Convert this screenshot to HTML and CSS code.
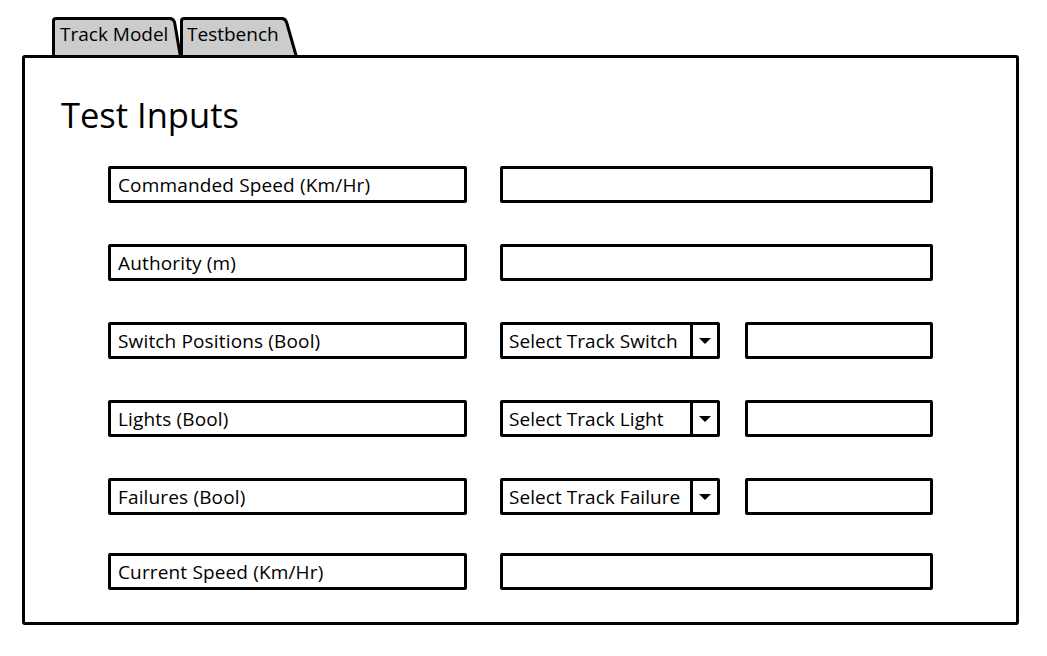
FILE: index.html
```html
<!DOCTYPE html>
<html>
<head>
<meta charset="utf-8">
<link rel="stylesheet" href="styles.css">
</head>
<body>
<div class="tabs">
  <div class="tab tab-model">
    <svg class="tab-bg" width="130" height="40" viewBox="0 0 130 40"><path d="M1.5 40 V4 Q1.5 1.5 4 1.5 H118 Q121 1.5 122.5 5 L128.5 40" fill="#cccccc" stroke="#000" stroke-width="3"/></svg>
    <span class="tab-label">Track Model</span>
  </div>
  <div class="tab tab-bench">
    <svg class="tab-bg" width="118" height="40" viewBox="0 0 118 40"><path d="M1.5 40 V4 Q1.5 1.5 4 1.5 H102 Q105 1.5 106.5 5 L116.5 40" fill="#cccccc" stroke="#000" stroke-width="3"/></svg>
    <span class="tab-label">Testbench</span>
  </div>
</div>
<div class="panel">
  <h1 class="title">Test Inputs</h1>
  <div class="form">
    <div class="box label">Commanded Speed (Km/Hr)</div>
    <div class="box input"></div>

    <div class="box label">Authority (m)</div>
    <div class="box input"></div>

    <div class="box label">Switch Positions (Bool)</div>
    <div class="pair">
      <div class="box select"><span class="select-text">Select Track Switch</span><span class="arrow"></span></div>
      <div class="box input small"></div>
    </div>

    <div class="box label">Lights (Bool)</div>
    <div class="pair">
      <div class="box select"><span class="select-text">Select Track Light</span><span class="arrow"></span></div>
      <div class="box input small"></div>
    </div>

    <div class="box label">Failures (Bool)</div>
    <div class="pair">
      <div class="box select"><span class="select-text">Select Track Failure</span><span class="arrow"></span></div>
      <div class="box input small"></div>
    </div>

    <div class="box label last">Current Speed (Km/Hr)</div>
    <div class="box input last"></div>
  </div>
</div>
</body>
</html>
```
FILE: styles.css
```css
html, body {
  margin: 0;
  padding: 0;
  background: #ffffff;
}
body {
  font-family: "Open Sans", "Noto Sans", sans-serif;
  color: #000;
  width: 1047px;
  height: 656px;
  overflow: hidden;
}
.tabs {
  display: flex;
  padding-left: 52px;
  padding-top: 17px;
  height: 39px;
  position: relative;
  z-index: 1;
}
.tab {
  position: relative;
  height: 40px;
  display: flex;
  align-items: flex-start;
}
.tab-model { width: 128px; }
.tab-bench { width: 118px; }
.tab-bg {
  position: absolute;
  left: 0;
  top: 0;
}
.tab-label {
  position: relative;
  font-size: 19px;
  line-height: 24px;
  padding-top: 5px;
  padding-left: 8px;
}
.tab-bench .tab-label { padding-left: 7px; }
.panel {
  margin-left: 22px;
  width: 997px;
  height: 570px;
  box-sizing: border-box;
  border: 3px solid #000;
  border-radius: 3px;
  margin-top: -1px;
  padding: 37px 0 0 36px;
  position: relative;
  z-index: 2;
  background: #fff;
}
.title {
  margin: 0;
  font-weight: 400;
  font-size: 34.5px;
  line-height: 40px;
}
.form {
  margin-top: 31px;
  margin-left: 47px;
  display: grid;
  grid-template-columns: 359px 433px;
  column-gap: 33px;
  row-gap: 41px;
}
.box {
  box-sizing: border-box;
  height: 37px;
  border: 3px solid #000;
  border-radius: 2px;
  background: #fff;
}
.label {
  display: flex;
  align-items: center;
  padding-left: 7px;
  font-size: 19px;
  letter-spacing: 0.15px;
}
.last { margin-top: -3px; }
.pair {
  display: flex;
  gap: 25px;
}
.select {
  width: 220px;
  display: flex;
  align-items: stretch;
}
.select-text {
  flex: 1;
  display: flex;
  align-items: center;
  padding-left: 6px;
  font-size: 19px;
  letter-spacing: 0.05px;
  white-space: nowrap;
  overflow: hidden;
}
.arrow {
  width: 24px;
  flex: none;
  border-left: 3px solid #000;
  display: flex;
  align-items: center;
  justify-content: center;
}
.arrow::before {
  content: "";
  width: 0;
  height: 0;
  border-left: 6px solid transparent;
  border-right: 6px solid transparent;
  border-top: 6px solid #000;
}
.small { width: 188px; }
```
